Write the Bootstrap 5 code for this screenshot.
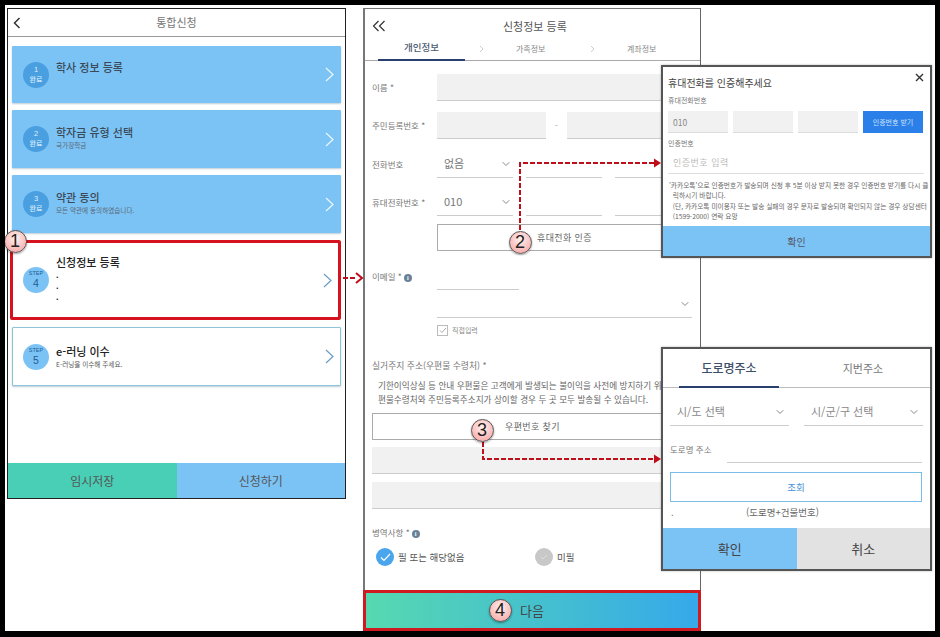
<!DOCTYPE html>
<html lang="ko">
<head>
  <meta charset="UTF-8">
  <meta name="viewport" content="width=device-width, initial-scale=1.0">
  <title>통합신청</title>
  <link href="https://cdn.jsdelivr.net/npm/bootstrap@5.3.0/dist/css/bootstrap.min.css" rel="stylesheet">
  <style>
    body { margin: 0; background: #fff; font-family: "Noto Sans CJK KR", "Noto Sans", sans-serif; color: #555; overflow: hidden; }
    .stage { position: relative; width: 940px; height: 637px; border: solid #000; border-width: 5px 5px 6px 5px; background: #fff; padding: 3px 0 0 2px; gap: 17px; overflow: hidden; }

    /* 왼쪽 화면 */
    .screen-a { width: 339px; height: 491px; border: 1px solid #222; background: #fff; }
    .top-a { height: 28px; border-bottom: 1px solid #999; font-size: 11px; color: #777; position: relative; }
    .top-a svg { position: absolute; left: 5px; top: 8px; }
    .steps { padding: 9px 4px 0 4px; }
    .step-card { height: 58px; border: 0; border-radius: 1px; background: #7cc3f5; box-shadow: 0 1px 2px rgba(60, 110, 150, .35); margin-bottom: 7px; padding: 0 7px 0 11px; flex-direction: row; align-items: center; position: relative; }
    .step-card:first-child { height: 57px; }
    .step-card:first-child .step-text { padding-top: 14px; }
    .step-card.now { height: 80px; margin: 0 0 7px -2px; background: #fff; border: 3px solid #d5121e; box-shadow: none; border-radius: 2px; padding-left: 10px; padding-right: 6px; }
    .step-card.todo { height: 59px; background: #fff; border: 1px solid #8fc4d8; padding-left: 10px; padding-right: 6px; }
    .step-dot { width: 26px; height: 26px; border-radius: 50%; background: #4a9fe0; color: #dff0fc; font-size: 7px; line-height: 10px; text-align: center; flex: none; padding-top: 3px; font-weight: 500; }
    .now .step-dot, .todo .step-dot { background: #7cc3f5; color: #1d5c96; font-family: "Liberation Sans", sans-serif; font-size: 5.5px; line-height: 7px; padding-top: 3px; }
    .step-dot b { display: block; font-family: "Liberation Sans", sans-serif; font-weight: 400; font-size: 7.5px; line-height: 9px; }
    .now .step-dot b, .todo .step-dot b { font-size: 10.5px; line-height: 13px; }
    .step-text { align-self: flex-start; padding: 15px 0 0 7px; flex: 1; }
    .now .step-text { padding-top: 12px; }
    .todo .step-text { padding-top: 16px; }
    .step-name { font-size: 11px; line-height: 14px; font-weight: 500; color: #3a4a58; }
    .now .step-name, .todo .step-name { color: #222; }
    .step-sub { font-size: 6.6px; line-height: 9px; color: #5a6a78; margin-top: 2px; }
    .todo .step-sub { color: #555; }
    .step-dots { font-family: "Liberation Sans", sans-serif; font-size: 9px; line-height: 11px; color: #222; font-weight: 700; margin-top: 1px; }
    .foot-a { height: 35px; }
    .foot-a .btn { border: 0; border-radius: 0; font-size: 12px; color: #555; padding: 0; }
    .bg-mint { background: #48cfb5; }
    .bg-sky { background: #7cc3f5; }

    /* 가운데 화면 */
    .screen-b { width: 338px; height: 623px; border: solid #777; border-width: 1px 0 0 2px; border-right: 1px solid #666; background: #fff; position: relative; }
    .top-b { height: 52px; border-bottom: 1px solid #aaa; position: relative; }
    .back-b { position: absolute; left: 7px; top: 11px; }
    .top-b-title { position: absolute; left: 138px; top: 10px; font-size: 11px; line-height: 14px; color: #555; }
    .tab-a, .tab-b { position: absolute; top: 33px; line-height: 13px; color: #888; font-size: 8px; }
    .tab-a { font-size: 9.5px; color: #4a5a70; font-weight: 500; left: 39px; top: 32px; }
    .tab-line { position: absolute; left: 13px; bottom: -1px; width: 87px; height: 2px; background: #27406e; }
    .tab-gt { position: absolute; top: 36px; }
    .form-b { padding: 0 0 0 7px; }
    .f-label { width: 65px; flex: none; font-size: 8.5px; color: #777; white-space: nowrap; }
    .f-row { display: flex; align-items: center; }
    .f-grey { background: #f1f1f1; border: 0; border-bottom: 1px solid #ccc; border-radius: 0; height: 27px; padding: 0 5px; box-shadow: none; }
    .f-line { border: 0; border-bottom: 1px solid #ccc; border-radius: 0; height: 28px; padding: 0 5px; background: none; font-size: 11px; color: #777; }
    .form-select.f-line { padding: 0 20px 0 7px; background-repeat: no-repeat; background-position: right 2px center; background-size: 10px 8px; background-image: url("data:image/svg+xml,%3csvg xmlns='http://www.w3.org/2000/svg' viewBox='0 0 16 16'%3e%3cpath fill='none' stroke='%23888' stroke-linecap='round' stroke-linejoin='round' stroke-width='2' d='m2 5 6 6 6-6'/%3e%3c/svg%3e"); line-height: 1; }
    .form-select.addr-sel { background-position: right 4px center; }
    .w-sel { width: 76px; flex: none; }
    .w-mid { width: 76px; flex: none; margin-left: 13px; }
    .w-end { width: 77px; flex: none; margin-left: 13px; }
    .out-btn { border: 1px solid #aaa; border-radius: 0; background: #fff; height: 27px; font-size: 9px; color: #666; padding: 0; letter-spacing: .4px; }
    .i-mark { display: inline-block; width: 8px; height: 8px; border-radius: 50%; background: #6a8299; color: #fff; font-size: 6px; line-height: 8px; text-align: center; font-weight: 700; margin-left: 2px; vertical-align: 0; font-family: "Liberation Serif", serif; }
    .chk { width: 11px; height: 11px; border: 1px solid #bbb; display: flex; align-items: center; justify-content: center; }
    .chk-text { font-size: 7px; color: #888; margin-left: 4px; }
    .addr-title { font-size: 8.8px; line-height: 14px; color: #777; margin-top: 23px; }
    .addr-note { font-size: 8.65px; line-height: 14px; color: #666; margin: 5px 0 0 6px; white-space: nowrap; }
    .mil-title { font-size: 8.5px; line-height: 14px; color: #777; margin-top: 16px; }
    .radio-dot { width: 18px; height: 18px; border-radius: 50%; display: flex; align-items: center; justify-content: center; flex: none; }
    .radio-text { font-size: 9.5px; color: #555; margin-left: 4px; }
    .next-btn { position: absolute; left: -2px; right: -1px; bottom: 0; height: 41px; border: 3px solid #cf1a22; border-radius: 0; background: linear-gradient(90deg, #56d9b0, #35a9ea); color: #444; font-size: 13px; padding: 0; }

    /* 겹친 팝업 */
    .pop { position: absolute; left: 656px; width: 271px; background: #fff; border: 2px solid #555; box-shadow: 0 0 2px rgba(0, 0, 0, .3); }
    .pop-phone { top: 60px; height: 193px; }
    .pop-addr { top: 342px; height: 224px; }
    .pop-title { font-size: 10px; line-height: 14px; color: #444; margin: 9px 0 0 5px; }
    .pop-x { position: absolute; right: 6px; top: 6px; }
    .pop-label { font-size: 7px; line-height: 10px; color: #777; margin-left: 5px; }
    .pop-cell { width: 60px; height: 22px; background: #f1f1f1; font-size: 8.5px; color: #888; padding: 0 0 0 5px; line-height: 22px; border: 0; border-radius: 0; border-bottom: 1px solid #ddd; }
    .pop-send { width: 60px; height: 22px; background: #2a7fe8; border: 0; border-radius: 0; color: #cfe3fb; font-size: 7px; padding: 0; }
    .pop-input { height: 21px; margin: 0 6px 0 5px; border: 0; border-bottom: 1px solid #ddd; border-radius: 0; padding: 0 0 0 5px; font-size: 9px; line-height: 20px; color: #bbb; letter-spacing: .5px; }
    .pop-note { font-size: 6.7px; line-height: 10.4px; color: #666; margin: 6px 0 0 6px; white-space: nowrap; }
    .pop-ok { position: absolute; left: 0; right: 0; bottom: 0; height: 30px; background: #7cc3f5; color: #556; border: 0; border-radius: 0; font-size: 10px; padding: 0; }
    .addr-tabs { height: 39px; border-bottom: 1px solid #bbb; position: relative; padding-left: 16px; }
    .addr-tab { width: 100px; text-align: center; line-height: 38px; padding-top: 0; font-size: 12px; color: #3d5068; font-weight: 500; height: 39px; border-bottom: 2px solid #27406e; margin-bottom: -1px; }
    .addr-tab.off { border: 0; font-size: 11px; color: #777; font-weight: 400; margin-left: 34px; }
    .addr-sel { width: 119px; flex: none; font-size: 11px; color: #888; }
    .addr-road { font-size: 8.5px; color: #777; }
    .look-btn { display: block; width: 252px; height: 30px; margin: 9px 0 0 7px; border: 1px solid #7abbe8; border-radius: 0; background: #fff; color: #4a90d9; font-size: 9.5px; padding: 0; }
    .road-hint { font-size: 9.5px; line-height: 14px; color: #666; margin: 3px 0 0 8px; }
    .addr-foot { position: absolute; left: 0; right: 0; bottom: 0; height: 41px; }
    .addr-foot .btn { border: 0; border-radius: 0; padding: 0; font-size: 13px; color: #444; }
    .bg-off { background: #e2e2e2; }

    /* 번호 표시 */
    .num { position: absolute; width: 23px; height: 23px; margin: -11.5px 0 0 -11.5px; border-radius: 50%; border: 1px solid #555; background: radial-gradient(circle at 50% 35%, #fff2ef, #f59c9c); color: #222; font-family: "Liberation Sans", sans-serif; font-size: 18px; line-height: 21px; text-align: center; box-shadow: 0 1px 2px rgba(0, 0, 0, .35); }
    .lines { position: absolute; left: -5px; top: -5px; pointer-events: none; }
  </style>
</head>
<body>
  <div class="stage d-flex align-items-start">

    <!-- 통합신청 -->
    <div class="screen-a d-flex flex-column flex-none">
      <div class="top-a d-flex align-items-center justify-content-center">
        <svg width="8" height="12" viewBox="0 0 8 12"><path d="M6.5 1 1.5 6l5 5" fill="none" stroke="#333" stroke-width="1.5"/></svg>
        통합신청
      </div>
      <div class="steps flex-grow-1">
        <div class="card step-card">
          <div class="step-dot"><b>1</b>완료</div>
          <div class="step-text"><div class="step-name">학사 정보 등록</div></div>
          <svg width="9" height="15" viewBox="0 0 9 15"><path d="M1 1l7 6.5L1 14" fill="none" stroke="#eef7fe" stroke-width="1.2"/></svg>
        </div>
        <div class="card step-card">
          <div class="step-dot"><b>2</b>완료</div>
          <div class="step-text"><div class="step-name">학자금 유형 선택</div><div class="step-sub">국가장학금</div></div>
          <svg width="9" height="15" viewBox="0 0 9 15"><path d="M1 1l7 6.5L1 14" fill="none" stroke="#eef7fe" stroke-width="1.2"/></svg>
        </div>
        <div class="card step-card">
          <div class="step-dot"><b>3</b>완료</div>
          <div class="step-text"><div class="step-name">약관 동의</div><div class="step-sub">모든 약관에 동의하였습니다.</div></div>
          <svg width="9" height="15" viewBox="0 0 9 15"><path d="M1 1l7 6.5L1 14" fill="none" stroke="#eef7fe" stroke-width="1.2"/></svg>
        </div>
        <div class="card step-card now">
          <div class="step-dot">STEP<b>4</b></div>
          <div class="step-text"><div class="step-name">신청정보 등록</div><div class="step-dots">.<br>.<br>.</div></div>
          <svg width="9" height="15" viewBox="0 0 9 15"><path d="M1 1l7 6.5L1 14" fill="none" stroke="#6a9cc4" stroke-width="1.2"/></svg>
        </div>
        <div class="card step-card todo">
          <div class="step-dot">STEP<b>5</b></div>
          <div class="step-text"><div class="step-name">e-러닝 이수</div><div class="step-sub">E-러닝을 이수해 주세요.</div></div>
          <svg width="9" height="15" viewBox="0 0 9 15"><path d="M1 1l7 6.5L1 14" fill="none" stroke="#6a9cc4" stroke-width="1.2"/></svg>
        </div>
      </div>
      <div class="foot-a d-flex">
        <button class="btn bg-mint w-50">임시저장</button>
        <button class="btn bg-sky w-50">신청하기</button>
      </div>
    </div>

    <!-- 신청정보 등록 -->
    <div class="screen-b flex-none">
      <div class="top-b">
        <svg class="back-b" width="14" height="12" viewBox="0 0 14 12"><path d="M6.5 1 1.5 6l5 5M12.5 1l-5 5 5 5" fill="none" stroke="#333" stroke-width="1.2"/></svg>
        <div class="top-b-title">신청정보 등록</div>
        <div class="tab-a">개인정보</div>
        <svg class="tab-gt" style="left:114px" width="5" height="8" viewBox="0 0 5 8"><path d="M1 1l3 3-3 3" fill="none" stroke="#ccc"/></svg>
        <div class="tab-b" style="left:151px">가족정보</div>
        <svg class="tab-gt" style="left:225px" width="5" height="8" viewBox="0 0 5 8"><path d="M1 1l3 3-3 3" fill="none" stroke="#ccc"/></svg>
        <div class="tab-b" style="left:262px">계좌정보</div>
        <div class="tab-line"></div>
      </div>
      <div class="form-b">
        <div class="f-row" style="margin-top:13px">
          <div class="f-label">이름 *</div>
          <div class="f-grey" style="width:255px"></div>
        </div>
        <div class="f-row" style="margin-top:11px">
          <div class="f-label">주민등록번호 *</div>
          <div class="f-grey" style="width:109px"></div>
          <div class="text-center" style="width:21px;font-size:8px;color:#999">-</div>
          <div class="f-grey" style="width:125px"></div>
        </div>
        <div class="f-row" style="margin-top:11px">
          <div class="f-label">전화번호</div>
          <select class="form-select f-line w-sel"><option>없음</option></select>
          <div class="f-line w-mid"></div>
          <div class="f-line w-end"></div>
        </div>
        <div class="f-row" style="margin-top:10px">
          <div class="f-label">휴대전화번호 *</div>
          <select class="form-select f-line w-sel"><option>010</option></select>
          <div class="f-line w-mid"></div>
          <div class="f-line w-end"></div>
        </div>
        <div class="f-row" style="margin-top:8px">
          <div class="f-label"></div>
          <button class="btn out-btn" style="width:255px">휴대전화 인증</button>
        </div>
        <div class="f-row" style="margin-top:12px">
          <div class="f-label" style="height:27px;line-height:27px">이메일 *<span class="i-mark">i</span></div>
          <div class="f-line" style="width:82px;height:27px"></div>
        </div>
        <div class="f-row">
          <div class="f-label"></div>
          <select class="form-select f-line" style="width:255px"><option></option></select>
        </div>
        <div class="f-row" style="margin-top:7px">
          <div class="f-label"></div>
          <span class="chk"><svg width="8" height="7" viewBox="0 0 8 7"><path d="M1 3.5 3 5.5 7 1" fill="none" stroke="#aaa"/></svg></span>
          <span class="chk-text">직접입력</span>
        </div>
        <div class="addr-title">실거주지 주소(우편물 수령처) *</div>
        <div class="addr-note">기한이익상실 등 안내 우편물은 고객에게 발생되는 불이익을 사전에 방지하기 위<br>편물수령처와 주민등록주소지가 상이할 경우 두 곳 모두 발송될 수 있습니다.</div>
        <button class="btn out-btn d-block" style="width:321px;margin-top:7px">우편번호 찾기</button>
        <div class="f-grey" style="width:320px;margin-top:7px"></div>
        <div class="f-grey" style="width:320px;margin-top:8px"></div>
        <div class="mil-title">병역사항 *<span class="i-mark">i</span></div>
        <div class="d-flex align-items-center" style="margin:9px 0 0 4px">
          <span class="radio-dot" style="background:#4aa5ec"><svg width="11" height="9" viewBox="0 0 11 9"><path d="M1 4.5 4 7.5 10 1" fill="none" stroke="#fff" stroke-width="1.2"/></svg></span>
          <span class="radio-text" style="width:137px">필 또는 해당없음</span>
          <span class="radio-dot" style="background:#c8c8c8"><svg width="8" height="6" viewBox="0 0 8 6"><path d="M1 3 3 5 7 1" fill="none" stroke="#ddd"/></svg></span>
          <span class="radio-text">미필</span>
        </div>
      </div>
      <button class="btn next-btn">다음</button>
    </div>

    <!-- 휴대전화 인증 팝업 -->
    <div class="pop pop-phone">
      <div class="pop-title">휴대전화를 인증해주세요</div>
      <svg class="pop-x" width="9" height="9" viewBox="0 0 9 9"><path d="M1 1l7 7M8 1 1 8" stroke="#333" stroke-width="1.4"/></svg>
      <div class="pop-label" style="margin-top:5px">휴대전화번호</div>
      <div class="d-flex" style="gap:5px;margin:6px 0 0 5px">
        <div class="pop-cell">010</div>
        <div class="pop-cell"></div>
        <div class="pop-cell"></div>
        <button class="btn pop-send">인증번호 받기</button>
      </div>
      <div class="pop-label" style="margin-top:5px">인증번호</div>
      <div class="pop-input" style="margin-top:5px">인증번호 입력</div>
      <div class="pop-note">'카카오톡'으로 인증번호가 발송되며 신청 후 5분 이상 받지 못한 경우 인증번호 받기를 다시 클<br>&nbsp; 릭하시기 바랍니다.<br>&nbsp; (단, 카카오톡 미이용자 또는 발송 실패의 경우 문자로 발송되며 확인되지 않는 경우 상담센터<br>&nbsp; (1599-2000) 연락 요망</div>
      <button class="btn pop-ok">확인</button>
    </div>

    <!-- 주소 찾기 팝업 -->
    <div class="pop pop-addr">
      <div class="addr-tabs d-flex">
        <div class="addr-tab">도로명주소</div>
        <div class="addr-tab off">지번주소</div>
      </div>
      <div class="d-flex" style="gap:15px;margin:10px 0 0 7px">
        <select class="form-select f-line addr-sel"><option>시/도 선택</option></select>
        <select class="form-select f-line addr-sel"><option>시/군/구 선택</option></select>
      </div>
      <div class="f-row" style="margin:9px 0 0 7px">
        <div class="addr-road" style="width:57px;height:28px;line-height:28px">도로명 주소</div>
        <div class="f-line" style="width:195px"></div>
      </div>
      <button class="btn look-btn">조회</button>
      <div class="road-hint d-flex"><span style="width:75px">.</span><span>(도로명+건물번호)</span></div>
      <div class="addr-foot d-flex">
        <button class="btn bg-sky" style="width:50%">확인</button>
        <button class="btn bg-off" style="width:50%">취소</button>
      </div>
    </div>

    <!-- 화살표 -->
    <svg class="lines" width="940" height="637" viewBox="0 0 940 637">
      <g fill="none" stroke="#c00d1a" stroke-width="2">
        <path d="M343 278h14" stroke-dasharray="5 2"/>
        <path d="M356 273l6 5-6 5"/>
        <path d="M520 230V163H655" stroke-dasharray="5 2"/>
        <path d="M483 442V459H655" stroke-dasharray="5 2"/>
      </g>
      <path d="M654 158.500 661 163 654 167.500Z" fill="#c00d1a"/>
      <path d="M654 454.500 661 459 654 463.500Z" fill="#c00d1a"/>
    </svg>
    <div class="num" style="left:10px;top:236.500px">1</div>
    <div class="num" style="left:515px;top:237px">2</div>
    <div class="num" style="left:477px;top:425px">3</div>
    <div class="num" style="left:495px;top:605px">4</div>
  </div>
  <script src="https://cdn.jsdelivr.net/npm/bootstrap@5.3.0/dist/js/bootstrap.bundle.min.js"></script>
</body>
</html>
